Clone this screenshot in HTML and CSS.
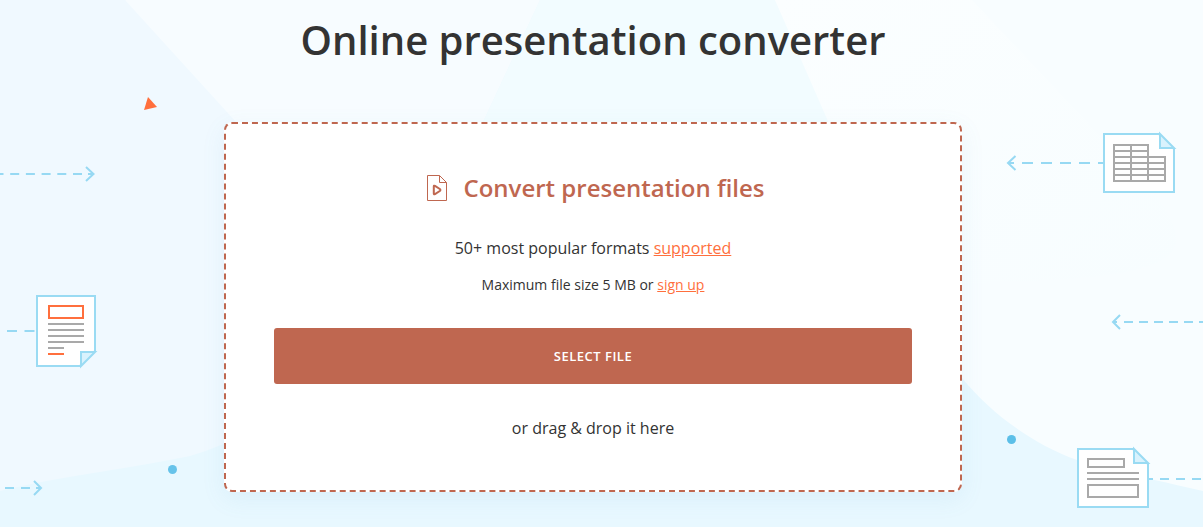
FILE: index.html
```html
<!DOCTYPE html>
<html lang="en">
<head>
  <meta charset="UTF-8">
  <meta name="viewport" content="width=device-width, initial-scale=1.0">
  <title>Online presentation converter</title>
  <link rel="stylesheet" href="styles.css">
</head>
<body>

  <main class="converter">

    <!-- background shapes, arrows and documents -->
    <svg class="backdrop" viewBox="0 0 1203 527" preserveAspectRatio="xMidYMin slice" aria-hidden="true">
      <defs>
        <linearGradient id="panelRight" x1="0" y1="0" x2="1" y2="1">
          <stop offset="0" stop-color="#fbfeff"/>
          <stop offset="1" stop-color="#f7fdff"/>
        </linearGradient>
      </defs>
      <rect width="1203" height="527" fill="#e8f8ff"/>
      <path d="M540 0H800L900 300H400Z" fill="#f2fcff"/>
      <path d="M125 0H540L400 300H236Z" fill="#f7fcff"/>
      <path d="M0 0H125L236 122L300 190V400Q240 442 190 456C130 469 60 476 0 491Z" fill="#f0f9ff"/>
      <path d="M775 0H1203V491C1130 474 1100 469 1077 460C1030 443 990 412 962 378L870 200Z" fill="#f8fdff"/>
      <path d="M775 0H972L1090 125C1130 165 1172 205 1176 235C1183 282 1060 280 900 286Z" fill="url(#panelRight)"/>

      <path d="M148 97L157 107L144 110Z" fill="#ff6f3d"/>
      <circle cx="172.500" cy="469.500" r="4.500" fill="#66c3ea"/>
      <circle cx="1011.500" cy="439.500" r="4.500" fill="#5bbfe8"/>

      <g class="arrow">
        <path d="M-5.500 174H83" stroke-dasharray="9 6.700"/>
        <path d="M88 174H93M86 167L93.500 174L86 181"/>
        <path d="M7 331H36" stroke-dasharray="10 7.500"/>
        <path d="M5 488H31" stroke-dasharray="9 7"/>
        <path d="M36 488H40M34 481L41 488L34 495"/>
        <path d="M1022 163H1103" stroke-dasharray="11 8"/>
        <path d="M1014 163H1008M1015.500 156L1008 163L1015.500 170"/>
        <path d="M1124 322H1203" stroke-dasharray="9 6"/>
        <path d="M1117 322H1113M1120 315L1113 322L1120 329"/>
        <path d="M1144 479H1203" stroke-dasharray="9 7"/>
      </g>

      <!-- text document -->
      <g class="sheet">
        <path d="M37 296H95V351L80 366H37Z"/>
        <path d="M81 366V352H95Z" class="fold"/>
        <path d="M49 306H83V318H49Z" class="accent"/>
        <path d="M48 324H84M48 330H84M48 336H84M48 342H84M48 348H64" class="lines"/>
        <path d="M48 354H64" class="accent"/>
      </g>

      <!-- spreadsheet -->
      <g class="sheet">
        <path d="M1104 134H1159L1174 149V192H1104Z"/>
        <path d="M1160 134V148H1174Z" class="fold"/>
        <path d="M1114 145H1148V181H1114ZM1131 145V181M1148 157H1165V181H1148M1114 151H1148M1114 157H1148M1114 163H1165M1114 169H1165M1114 175H1165" class="lines"/>
      </g>

      <!-- form document -->
      <g class="sheet">
        <path d="M1078 449H1133L1148 464V507H1078Z"/>
        <path d="M1134 449V463H1148Z" class="fold"/>
        <path d="M1088 459H1124V467H1088ZM1087 473H1139M1087 479H1139M1088 485H1138V497H1088Z" class="lines"/>
      </g>
    </svg>

    <h1>Online presentation converter</h1>

    <section class="drop-zone">
      <h2>
        <svg class="file-icon" viewBox="0 0 20 26" width="20" height="26" aria-hidden="true">
          <path d="M.5 .5H12.500L19.500 7.500V25.500H.5Z"/>
          <path d="M12.500 .5V7.500H19.500"/>
          <path d="M6.800 11.500Q6.800 10.300 8 10.900L12.800 14Q14 15 12.800 16L8 19.100Q6.800 19.700 6.800 18.500Z" class="play"/>
        </svg>
        Convert presentation files
      </h2>
      <p class="formats">50+ most popular formats <a href="#">supported</a></p>
      <p class="limit">Maximum file size 5 MB or <a href="#">sign up</a></p>
      <button type="button" class="select-file">SELECT FILE</button>
      <p class="hint">or drag &amp; drop it here</p>
    </section>

  </main>

</body>
</html>
```
FILE: styles.css
```css
* {
  box-sizing: border-box;
}

body {
  margin: 0;
  font-family: "Open Sans", "Noto Sans", sans-serif;
  color: #333;
  background-color: #e8f8ff;
}

.converter {
  position: relative;
  min-height: 100vh;
  padding: 12px 17px 35px 0;
  overflow: hidden;
}

.backdrop {
  position: absolute;
  top: 0;
  left: 0;
  width: 100%;
  height: 100%;
}

.arrow {
  fill: none;
  stroke: #97d9f3;
  stroke-width: 2;
}

/* documents */
.sheet {
  fill: #fff;
  stroke: #9adbf3;
  stroke-width: 2;
}
.sheet .fold {
  fill: #d9f2fd;
}
.sheet .lines {
  fill: none;
  stroke: #a9a9a9;
}
.sheet .accent {
  stroke: #ff6f3d;
}

h1 {
  position: relative;
  margin: 0 0 54px;
  font-size: 40px;
  line-height: 56px;
  font-weight: 600;
  text-align: center;
}

/* upload card */
.drop-zone {
  position: relative;
  display: flex;
  flex-direction: column;
  align-items: center;
  max-width: 738px;
  margin: 0 auto;
  padding: 48px 48px 50px;
  background-color: #fff;
  border: 2px dashed #bf6750;
  border-radius: 8px;
  box-shadow: 0 7px 25px rgba(85, 150, 200, 0.09);
}
.drop-zone h2 {
  display: flex;
  align-items: center;
  gap: 16px;
  margin: 0 0 32px;
  padding-left: 6px;
  font-size: 24px;
  line-height: 32px;
  font-weight: 600;
  color: #bf6750;
}
.drop-zone p {
  margin: 0;
  font-size: 16px;
  line-height: 24px;
}
.drop-zone a {
  color: #ff6f3d;
}

.file-icon {
  fill: none;
  stroke: #bf6750;
  stroke-width: 1;
}
.file-icon .play {
  stroke-width: 2;
}

.drop-zone .limit {
  margin: 13px 0 31px;
  font-size: 14px;
}

.select-file {
  width: 100%;
  height: 56px;
  margin-bottom: 32px;
  border: none;
  border-radius: 3px;
  background-color: #bf6750;
  color: #fff;
  font-family: inherit;
  font-size: 13px;
  font-weight: 600;
  letter-spacing: 0.5px;
  cursor: pointer;
}
```
